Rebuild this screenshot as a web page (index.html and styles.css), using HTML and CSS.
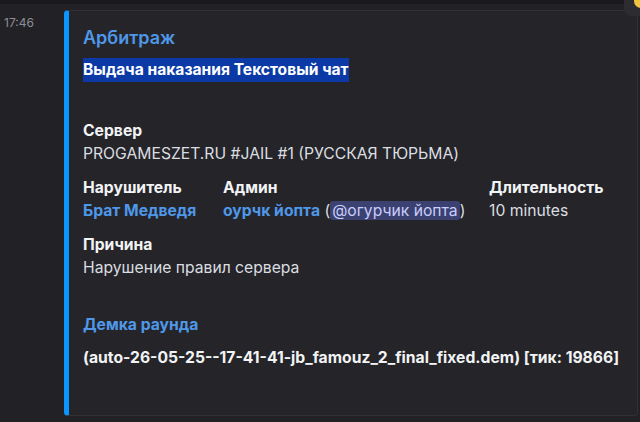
FILE: index.html
```html
<!DOCTYPE html>
<html lang="ru">
<head>
<meta charset="utf-8">
<link rel="stylesheet" href="styles.css">
</head>
<body>
<div class="topbar"></div>
<div class="popup"></div>
<div class="message">
  <div class="time">17:46</div>
  <div class="embed">
    <div class="title">Арбитраж</div>
    <div class="desc"><span class="hl">Выдача наказания Текстовый чат</span></div>
    <div class="field">
      <div class="fname">Сервер</div>
      <div class="fvalue">PROGAMESZET.RU #JAIL #1 (РУССКАЯ ТЮРЬМА)</div>
    </div>
    <div class="row">
      <div class="field c1">
        <div class="fname">Нарушитель</div>
        <div class="fvalue link">Брат Медведя</div>
      </div>
      <div class="field c2">
        <div class="fname">Админ</div>
        <div class="fvalue"><span class="link">оурчк йопта</span> (<span class="mention">@огурчик йопта</span>)</div>
      </div>
      <div class="field c3">
        <div class="fname">Длительность</div>
        <div class="fvalue">10 minutes</div>
      </div>
    </div>
    <div class="field">
      <div class="fname">Причина</div>
      <div class="fvalue">Нарушение правил сервера</div>
    </div>
    <div class="field demo">
      <div class="fname link">Демка раунда</div>
      <div class="fvalue strong">(auto-26-05-25--17-41-41-jb_famouz_2_final_fixed.dem) [тик: 19866]</div>
    </div>
  </div>
</div>
</body>
</html>
```
FILE: styles.css
```css
* { box-sizing: border-box; }
html, body { margin: 0; padding: 0; }
body {
  width: 640px;
  height: 422px;
  overflow: hidden;
  background: #222226;
  font-family: "Inter", "Noto Sans", sans-serif;
  color: #dbdee1;
  position: relative;
}
.topbar {
  height: 4px;
  background: #1a1a1e;
}
.popup {
  position: absolute;
  top: -6px;
  left: 624px;
  width: 30px;
  height: 22px;
  border-radius: 7px;
  background: #2c2c31;
}
.popup::after {
  content: "";
  position: absolute;
  left: 10px;
  top: 0;
  width: 12px;
  height: 14px;
  border-radius: 0 0 0 7px;
  background: #f0c53d;
}
.message {
  display: flex;
  padding-top: 6px;
}
.time {
  width: 64px;
  padding: 5px 0 0 4px;
  font-size: 12px;
  color: #8e8f96;
}
.embed {
  width: 574px;
  height: 406px;
  background: #252529;
  border: 1px solid #303035;
  border-left: 5px solid #0a95ff;
  border-radius: 4px;
  padding: 15px 15px 0 14px;
}
.title {
  font-size: 18px;
  font-weight: 600;
  color: #4f97e8;
  line-height: 24px;
}
.desc {
  margin-top: 8px;
  font-size: 15.6px;
  font-weight: 700;
  line-height: 23px;
  color: #ffffff;
}
.hl {
  background: #0b3aa6;
  padding: 2px 0 3px;
}
.field {
  margin-top: 11px;
  font-size: 15.7px;
  line-height: 23px;
}
.desc + .field { margin-top: 38px; }
.fname {
  font-weight: 700;
  color: #f2f3f5;
}
.row {
  display: flex;
}
.c1 { width: 140px; }
.c2 { width: 266px; }
.link {
  color: #4f97e8;
  font-weight: 700;
}
.mention {
  background: #3b4170;
  color: #c9cdfb;
  border-radius: 3px;
  padding: 0 2px;
}
.demo { margin-top: 34px; }
.demo .fvalue { margin-top: 10px; }
.strong {
  font-weight: 700;
  color: #f2f3f5;
}
```
